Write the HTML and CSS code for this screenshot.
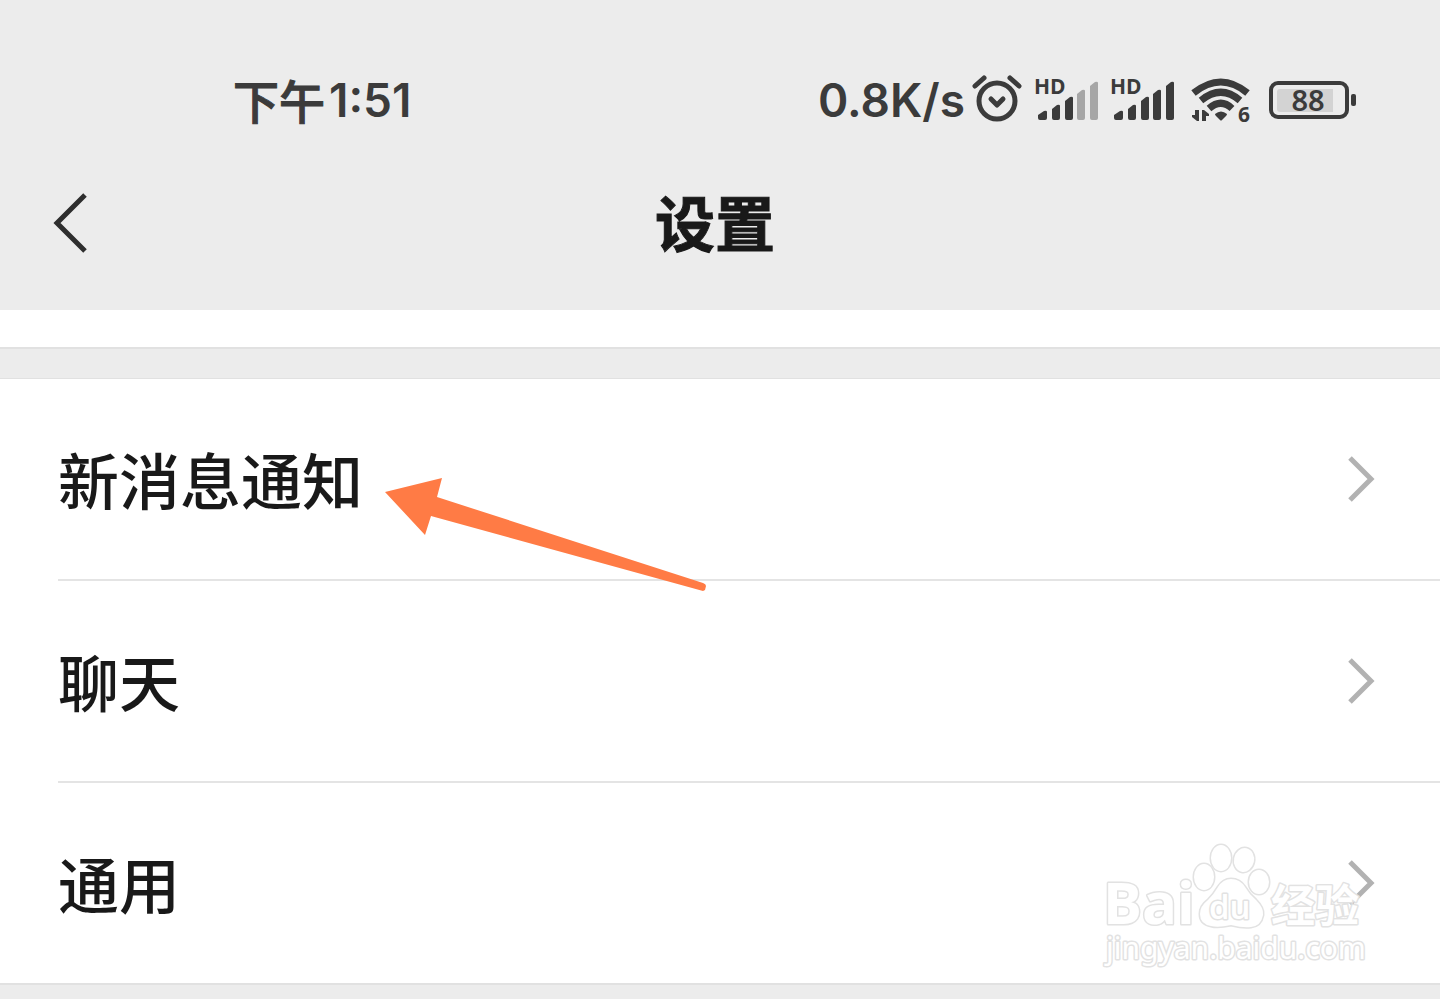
FILE: index.html
```html
<!DOCTYPE html>
<html lang="zh-CN">
<head>
<meta charset="utf-8">
<meta name="viewport" content="width=device-width, initial-scale=1">
<title>设置</title>
<link rel="stylesheet" href="styles.css">
</head>
<body>
<header class="top">
  <div class="status">
    <div class="time"><span class="time-period">下午</span><span class="time-clock">1:51</span></div>
    <div class="indicators">
      <span class="speed">0.8K/s</span>
      <svg class="alarm" width="52" height="50" viewBox="0 0 52 50" fill="none" stroke="#3b3b3b" stroke-linecap="round" stroke-linejoin="round">
        <circle cx="25" cy="26" r="18" stroke-width="5"/>
        <path d="M19 24l6 6 6-6" stroke-width="5"/>
        <path d="M3 11l9-8M38 3l9 8" stroke-width="5"/>
      </svg>
      <svg class="signal" width="64" height="44" viewBox="0 0 64 44" fill="#3b3b3b">
        <text class="hd" x="-2" y="16">HD</text>
        <path d="M2 37l6-4q3-1 3 1v6q0 2-2 2H4q-2 0-2-2zM16 31l5-4q3-1 3 1v12q0 2-2 2h-4q-2 0-2-2zM29 23l5-4q3-1 3 1v20q0 2-2 2h-4q-2 0-2-2z"/>
        <path fill="#a6a6a6" d="M41 16l5-4q3-1 3 1v27q0 2-2 2h-4q-2 0-2-2zM54 8l5-4q3-1 3 1v35q0 2-2 2h-4q-2 0-2-2z"/>
      </svg>
      <svg class="signal" width="64" height="44" viewBox="0 0 64 44" fill="#3b3b3b">
        <text class="hd" x="-2" y="16">HD</text>
        <path d="M2 37l6-4q3-1 3 1v6q0 2-2 2H4q-2 0-2-2zM16 31l5-4q3-1 3 1v12q0 2-2 2h-4q-2 0-2-2zM29 23l5-4q3-1 3 1v20q0 2-2 2h-4q-2 0-2-2z"/>
        <path d="M41 16l5-4q3-1 3 1v27q0 2-2 2h-4q-2 0-2-2zM54 8l5-4q3-1 3 1v35q0 2-2 2h-4q-2 0-2-2z"/>
      </svg>
      <svg class="wifi" width="60" height="46" viewBox="0 0 60 46" fill="none" stroke="#3b3b3b" stroke-width="7">
        <path d="M2.500 16Q30-6 56.500 16M10 23.500Q30 7 49 23.500M18 31.500Q30 21 41 31.500"/>
        <path fill="#3b3b3b" stroke="none" d="M24 37q6-5 12 0 0 1-1 2l-4 4q-1 1-2 0l-4-4q-1-1-1-2z"/>
        <path fill="#3b3b3b" stroke="none" d="M4 33h4v11H6l-5-4v-2h3zM11 33h2l5 4v2h-3v5h-4z"/>
        <text class="wifi-gen" x="47" y="45">6</text>
      </svg>
      <svg class="battery" width="90" height="40" viewBox="0 0 90 40">
        <rect x="3" y="3" width="76" height="34" rx="7" fill="none" stroke="#3b3b3b" stroke-width="4"/>
        <path fill="#d3d3d3" d="M12 9h53v23H12q-3 0-3-3V12q0-3 3-3z"/>
        <rect x="83" y="14" width="5" height="12" rx="2" fill="#3b3b3b"/>
        <text class="battery-level" x="40" y="31">88</text>
      </svg>
    </div>
  </div>
  <div class="navbar">
    <button class="back" type="button" aria-label="返回">
      <svg width="36" height="62" viewBox="0 0 36 62" fill="none" stroke="#2e2e2e" stroke-width="5"><path d="M33 3L5 31l28 28"/></svg>
    </button>
    <h1 class="title">设置</h1>
  </div>
</header>
<main class="content">
  <div class="previous"></div>
  <nav class="list">
    <a class="row" href="#notifications"><span>新消息通知</span>
      <svg class="chevron" width="30" height="48" viewBox="0 0 30 48" fill="none" stroke="#b2b2b2" stroke-width="5"><path d="M4 3l21 21L4 45"/></svg>
      <svg class="pointer" width="324" height="116" viewBox="0 0 324 116"><path fill="#ff7b45" d="M1 15l57-14-5 19 266 86q3 1 3 3l-1 4-2 1L47 39l-6 19z"/></svg>
    </a>
    <a class="row" href="#chat"><span>聊天</span>
      <svg class="chevron" width="30" height="48" viewBox="0 0 30 48" fill="none" stroke="#b2b2b2" stroke-width="5"><path d="M4 3l21 21L4 45"/></svg>
    </a>
    <a class="row" href="#general"><span>通用</span>
      <svg class="chevron" width="30" height="48" viewBox="0 0 30 48" fill="none" stroke="#b2b2b2" stroke-width="5"><path d="M4 3l21 21L4 45"/></svg>
      <svg class="watermark" width="280" height="140" viewBox="0 0 280 140">
        <g class="mark">
          <text class="mark-latin" x="13" y="94">Bai</text>
          <ellipse cx="114" cy="47" rx="10" ry="13"/>
          <ellipse cx="131" cy="28" rx="10" ry="13"/>
          <ellipse cx="154" cy="30" rx="10" ry="12" transform="rotate(12 154 30)"/>
          <ellipse cx="169" cy="52" rx="10" ry="12"/>
          <path d="M141 49q9 0 14 8 4 7 11 13 8 8 7 15-2 11-12 12-8 1-20-2-13 3-20 1-11-2-11-12 0-8 8-14 6-6 10-13 5-8 13-8z"/>
          <text class="mark-du" x="119" y="89">du</text>
          <text class="mark-cjk" x="181" y="92">经验</text>
          <text class="mark-url" x="16" y="129">jingyan.baidu.com</text>
        </g>
      </svg>
    </a>
  </nav>
</main>
</body>
</html>
```
FILE: styles.css
```css
* { box-sizing: border-box; }

body {
  margin: 0;
  min-height: 100vh;
  background: #ececec;
  color: #191919;
  font-family: Inter, "Noto Sans CJK SC", sans-serif;
}

svg { display: block; flex: none; overflow: visible; }

.top { background: #ececec; }

.status {
  display: flex;
  align-items: center;
  justify-content: space-between;
  height: 148px;
  padding: 52px 82px 0 233px;
  color: #3b3b3b;
}

.time {
  display: flex;
  align-items: center;
  gap: 4px;
  font-size: 46px;
  line-height: 60px;
}

.time-period {
  padding-bottom: 2px;
  font-family: "Noto Sans CJK SC", sans-serif;
  font-weight: 500;
  -webkit-text-stroke: 1px #3b3b3b;
}

.time-clock,
.speed {
  font-family: Inter, sans-serif;
  font-size: 46px;
  font-weight: 600;
  line-height: 60px;
}

.indicators { display: flex; align-items: center; }

.alarm { margin-left: 7px; }
.signal { margin-left: 12px; }
.wifi { margin-left: 15px; }
.battery { margin-left: 17px; }

.hd { font: 700 21px "Open Sans", sans-serif; }
.wifi-gen { font: 700 21px "Open Sans", sans-serif; fill: #3b3b3b; stroke: none; }
.battery-level { font: 600 29px "Noto Sans", sans-serif; fill: #3b3b3b; text-anchor: middle; }

.navbar {
  display: grid;
  grid-template-columns: 90px 1fr 100px;
  align-items: center;
  height: 162px;
  padding-bottom: 12px;
}

.back {
  padding: 0 0 0 52px;
  border: 0;
  background: none;
}

.title {
  margin: 0;
  padding-bottom: 4px;
  font-family: "Noto Sans CJK SC", sans-serif;
  font-size: 60px;
  font-weight: 700;
  line-height: 88px;
  text-align: center;
  -webkit-text-stroke: 1px #191919;
}

.previous {
  height: 39px;
  border-bottom: 2px solid #e1e1e1;
  background: #fff;
}

.list {
  margin-top: 29px;
  border-top: 1px solid #e1e1e1;
  border-bottom: 2px solid #e1e1e1;
  background: #fff;
}

.row {
  position: relative;
  display: flex;
  align-items: center;
  justify-content: space-between;
  height: 202px;
  margin-left: 58px;
  padding-right: 64px;
  border-bottom: 2px solid #e4e4e4;
  color: #191919;
  font-family: "Noto Sans CJK SC", sans-serif;
  font-size: 61px;
  font-weight: 500;
  line-height: 88px;
  text-decoration: none;
}

.row:last-child {
  height: 200px;
  border-bottom: 0;
}

.pointer {
  position: absolute;
  left: 326px;
  top: 98px;
  z-index: 1;
}

.watermark {
  position: absolute;
  right: 70px;
  bottom: 13px;
}

.mark {
  fill: #fff;
  stroke: #e2e2e2;
  stroke-width: 3px;
  stroke-linejoin: round;
  paint-order: stroke;
}

.mark-latin { font: 700 58px "Open Sans", sans-serif; }
.mark-du { font: 600 33px "Open Sans", sans-serif; }
.mark-cjk { font: 700 44px "Noto Sans CJK SC", sans-serif; }
.mark-url { font: 400 30px "Noto Sans", sans-serif; }
```
